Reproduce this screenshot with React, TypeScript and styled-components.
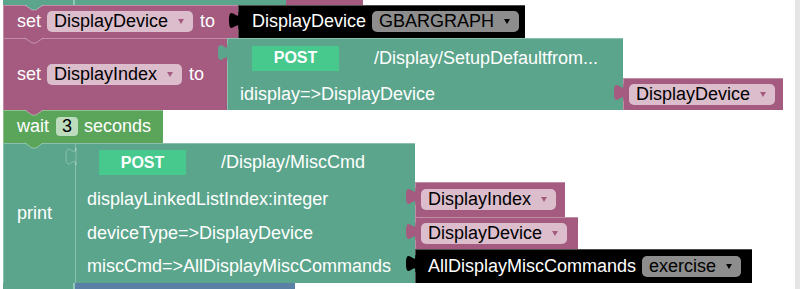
import React from 'react';
import styled, { createGlobalStyle } from 'styled-components';

const PINK = '#a55b80';
const TEAL = '#5ba58c';
const GREEN = '#5ba55b';
const BLUE = '#5b80a5';
const BLACK = '#000000';
const POST_GREEN = '#47c98e';
const HILITE = 'rgba(255,255,255,0.3)';

const Global = createGlobalStyle`
  html, body { margin: 0; padding: 0; background: #fff; }
  body { font-family: "Liberation Sans", Arial, sans-serif; overflow: hidden; }
`;

const Page = styled.div`
  width: 800px;
  height: 289px;
  display: flex;
  overflow: hidden;
  background: #fff;
`;

const Canvas = styled.div`
  flex: 1;
  padding-left: 3px;
  display: flex;
  flex-direction: column;
  align-items: flex-start;
  overflow: hidden;
`;

const Scrollbar = styled.div`
  width: 5px;
  flex: none;
  background: #e6e6e6;
`;

const Strip = styled.div<{ $h: number }>`
  display: flex;
  height: ${p => p.$h}px;
  flex: none;
`;

const Seg = styled.div<{ $w: number; $color: string }>`
  width: ${p => p.$w}px;
  background: ${p => p.$color};
`;

const Line = styled.div<{ $h: number }>`
  display: flex;
  align-items: stretch;
  height: ${p => p.$h}px;
  flex: none;
`;

const Block = styled.div<{ $color: string; $w: number; $pl?: number }>`
  position: relative;
  display: flex;
  align-items: center;
  box-sizing: border-box;
  width: ${p => p.$w}px;
  flex: none;
  padding-left: ${p => p.$pl ?? 14}px;
  background: ${p => p.$color};
  color: #fff;
  font-size: 18px;
  white-space: nowrap;
  box-shadow: inset 1px 1px 0 ${HILITE};
`;

const Field = styled.span<{ $bg: string; $arrow: string }>`
  display: inline-flex;
  align-items: center;
  height: 21px;
  line-height: 21px;
  padding: 0 9px 0 7px;
  margin: 0 7px 0 6px;
  border-radius: 5px;
  background: ${p => p.$bg};
  color: #000;
  font-size: 18px;
  &::after {
    content: '';
    margin-left: 10px;
    border-left: 3.5px solid transparent;
    border-right: 3.5px solid transparent;
    border-top: 5px solid ${p => p.$arrow};
  }
`;

const NumField = styled.span`
  display: inline-flex;
  align-items: center;
  justify-content: center;
  width: 22px;
  height: 19px;
  margin: 0 6px 0 7px;
  border-radius: 4px;
  background: #bddbbd;
  color: #000;
  font-size: 18px;
`;

const Api = styled.div`
  position: relative;
  display: flex;
  flex-direction: column;
  flex: none;
`;

const ApiRow = styled.div<{ $h: number }>`
  display: flex;
  height: ${p => p.$h}px;
`;

const ApiCell = styled.div<{ $w: number; $pl: number; $top?: boolean }>`
  display: flex;
  align-items: center;
  box-sizing: border-box;
  width: ${p => p.$w}px;
  padding-left: ${p => p.$pl}px;
  background: ${TEAL};
  color: #fff;
  font-size: 18px;
  white-space: nowrap;
  box-shadow: inset 1px ${p => (p.$top ? 1 : 0)}px 0 ${HILITE};
`;

const PostButton = styled.span`
  display: inline-flex;
  align-items: center;
  justify-content: center;
  width: 87px;
  height: 25px;
  background: ${POST_GREEN};
  color: #fff;
  font-weight: bold;
  font-size: 16px;
  margin-right: 35px;
`;

const TabSvg = styled.svg<{ $top: number }>`
  position: absolute;
  left: -9px;
  top: ${p => p.$top}px;
  width: 10px;
  height: 17px;
  overflow: visible;
`;

const NotchSvg = styled.svg`
  position: absolute;
  left: 22px;
  top: 0;
  width: 18px;
  height: 5px;
  overflow: visible;
`;

const Tab: React.FC<{ color: string; top?: number; outline?: boolean }> = ({ color, top = 6, outline }) => (
  <TabSvg $top={top} viewBox="0 0 8 15" preserveAspectRatio="none">
    <path
      d="M8 0 c0 10 -8 -8 -8 7.5 s8 -2.5 8 7.5 Z"
      fill={color}
      stroke={outline ? 'rgba(255,255,255,0.35)' : 'none'}
      strokeWidth={outline ? 0.8 : 0}
      vectorEffect="non-scaling-stroke"
    />
    {!outline && <rect x="7.5" y="0" width="1.5" height="15" fill={color} />}
  </TabSvg>
);

const Notch: React.FC<{ color: string }> = ({ color }) => (
  <NotchSvg viewBox="0 0 18 5">
    <path d="M0 0 L7 5 L11 5 L18 0 Z" fill={color} />
    <path d="M0 0 L7 5 L11 5 L18 0" fill="none" stroke="rgba(255,255,255,0.35)" strokeWidth="1" />
  </NotchSvg>
);

const PinkField: React.FC<{ children: React.ReactNode }> = ({ children }) => (
  <Field $bg="#dbbdcc" $arrow={PINK}>{children}</Field>
);

const GrayField: React.FC<{ children: React.ReactNode }> = ({ children }) => (
  <Field $bg="#8d8d8d" $arrow="#000">{children}</Field>
);

const VarBlock: React.FC<{ w: number; name: string }> = ({ w, name }) => (
  <Block $color={PINK} $w={w} $pl={0}>
    <Tab color={PINK} />
    <PinkField>{name}</PinkField>
  </Block>
);

export default function App() {
  return (
    <Page>
      <Global />
      <Canvas>
        <Strip $h={5}>
          <Seg $w={70} $color={TEAL} />
          <Seg $w={2} $color="#94c8b6" />
          <Seg $w={211} $color={TEAL} />
          <Seg $w={77} $color={PINK} />
        </Strip>

        <Line $h={33}>
          <Block $color={PINK} $w={235}>
            <Notch color={TEAL} />
            set<PinkField>DisplayDevice</PinkField>to
          </Block>
          <Block $color={BLACK} $w={287} $pl={14}>
            <Tab color={BLACK} top={7} />
            DisplayDevice<GrayField>GBARGRAPH</GrayField>
          </Block>
        </Line>

        <Line $h={72}>
          <Block $color={PINK} $w={224}>
            <Notch color={PINK} />
            set<PinkField>DisplayIndex</PinkField>to
          </Block>
          <Api>
            <Tab color={TEAL} top={6} />
            <ApiRow $h={40}>
              <ApiCell $w={396} $pl={25} $top>
                <PostButton>POST</PostButton>/Display/SetupDefaultfrom...
              </ApiCell>
            </ApiRow>
            <ApiRow $h={32}>
              <ApiCell $w={396} $pl={13}>idisplay=&gt;DisplayDevice</ApiCell>
              <VarBlock w={160} name="DisplayDevice" />
            </ApiRow>
          </Api>
        </Line>

        <Line $h={33}>
          <Block $color={GREEN} $w={160}>
            <Notch color={PINK} />
            wait<NumField>3</NumField>seconds
          </Block>
        </Line>

        <Line $h={140}>
          <Block $color={TEAL} $w={72}>
            <Notch color={GREEN} />
            print
          </Block>
          <Api>
            <Tab color={TEAL} top={5} outline />
            <ApiRow $h={39}>
              <ApiCell $w={340} $pl={24} $top>
                <PostButton>POST</PostButton>/Display/MiscCmd
              </ApiCell>
            </ApiRow>
            <ApiRow $h={35}>
              <ApiCell $w={340} $pl={12}>displayLinkedListIndex:integer</ApiCell>
              <VarBlock w={150} name="DisplayIndex" />
            </ApiRow>
            <ApiRow $h={32}>
              <ApiCell $w={340} $pl={12}>deviceType=&gt;DisplayDevice</ApiCell>
              <VarBlock w={163} name="DisplayDevice" />
            </ApiRow>
            <ApiRow $h={34}>
              <ApiCell $w={340} $pl={12}>miscCmd=&gt;AllDisplayMiscCommands</ApiCell>
              <Block $color={BLACK} $w={337} $pl={13}>
                <Tab color={BLACK} />
                AllDisplayMiscCommands<GrayField>exercise</GrayField>
              </Block>
            </ApiRow>
          </Api>
        </Line>

        <Strip $h={6}>
          <Seg $w={70} $color={TEAL} />
          <Seg $w={2} $color="#94c8b6" />
          <Seg $w={220} $color={BLUE} />
        </Strip>
      </Canvas>
      <Scrollbar />
    </Page>
  );
}
